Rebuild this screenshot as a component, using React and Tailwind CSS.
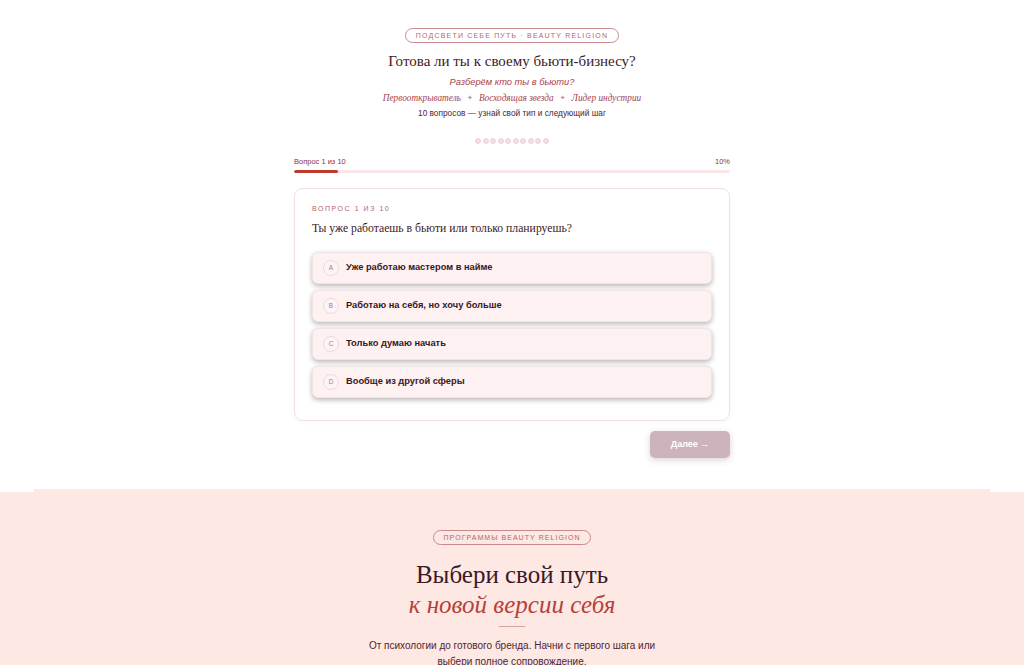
import { useState } from 'react';

const OPTIONS = [
  { key: 'A', text: 'Уже работаю мастером в найме' },
  { key: 'B', text: 'Работаю на себя, но хочу больше' },
  { key: 'C', text: 'Только думаю начать' },
  { key: 'D', text: 'Вообще из другой сферы' },
];

const sans = "font-['Liberation_Sans',Arial,sans-serif]";
const serif = "font-['Liberation_Serif',Georgia,serif]";

const Sparkle = () => (
  <span className="not-italic font-['DejaVu_Sans',sans-serif] text-[7px] text-[#c98a90]">✦</span>
);

const Quiz = () => {
  const [picked, setPicked] = useState(null);
  const step = 1;
  const total = 10;
  const progress = (step / total) * 100;

  return (
    <section className="bg-white pt-[28px] pb-[34px]">
      <div className="mx-auto w-[436px] flex flex-col items-center">
        <div className={`${sans} rounded-full border border-[#c98a8f] px-[10px] h-[15px] flex items-center text-[7px] leading-none tracking-[0.17em] text-[#b0676d] uppercase`}>
          Подсвети себе путь · Beauty Religion
        </div>

        <h1 className={`${serif} mt-[8px] text-[15px] leading-[20px] text-[#3b1a26]`}>
          Готова ли ты к своему бьюти-бизнесу?
        </h1>

        <p className={`${sans} mt-[4px] text-[9.3px] leading-[14px] italic text-[#a8424b]`}>Разберём кто ты в бьюти?</p>

        <div className={`${serif} mt-[2px] flex items-center gap-[6px] text-[9.3px] leading-[14px] italic text-[#a6434c]`}>
          <span>Первооткрыватель</span>
          <Sparkle />
          <span>Восходящая звезда</span>
          <Sparkle />
          <span>Лидер индустрии</span>
        </div>

        <p className={`${sans} mt-[2px] text-[8.3px] leading-[12px] text-[#4b2530]`}>10 вопросов — узнай свой тип и следующий шаг</p>

        <div className="mt-[19px] flex gap-[1.5px]">
          {Array.from({ length: total }).map((_, i) => (
            <span key={i} className="w-[6px] h-[6px] rounded-full bg-[#f5dfe2] border border-[#efd3d7]" />
          ))}
        </div>

        {/* progress */}
        <div className="w-full mt-[13px]">
          <div className={`${sans} flex justify-between text-[7.5px] leading-[10px] text-[#8e2f3c]`}>
            <span>Вопрос {step} из {total}</span>
            <span>{progress}%</span>
          </div>
          <div className="mt-[3px] h-[3px] rounded-full bg-[#f8e6e8] overflow-hidden">
            <div className="h-full rounded-full bg-[#c0392f]" style={{ width: `${progress}%` }} />
          </div>
        </div>

        {/* card */}
        <div className="w-full mt-[15px] rounded-[9px] border border-[#f2e1e3] bg-white shadow-[0_1px_4px_rgba(180,120,130,0.08)] px-[17px] pt-[15px] pb-[22px]">
          <div className={`${sans} text-[7px] leading-[10px] tracking-[0.22em] text-[#b5636b] uppercase`}>Вопрос 1 из 10</div>
          <div className={`${serif} mt-[7px] text-[11.7px] leading-[16px] text-[#3b1a26]`}>
            Ты уже работаешь в бьюти или только планируешь?
          </div>
          <div className="mt-[15px] flex flex-col gap-[6px]">
            {OPTIONS.map((o) => (
              <button
                key={o.key}
                onClick={() => setPicked(o.key)}
                className={`${sans} h-[32px] rounded-[6px] bg-[#fdf1f2] border border-[#f4e3e5] shadow-[0_2px_5px_rgba(60,40,45,0.35)] flex items-center px-[10px] gap-[7px] text-left`}
              >
                <span className="w-[16px] h-[16px] rounded-full border border-[#f1d9dc] bg-[#fdf4f5] flex items-center justify-center text-[6.5px] text-[#a08088]">
                  {o.key}
                </span>
                <span className={`text-[9.3px] font-bold ${picked === o.key ? 'text-[#b03a3e]' : 'text-[#3a1624]'}`}>{o.text}</span>
              </button>
            ))}
          </div>
        </div>

        <div className="w-full mt-[10px] flex justify-end">
          <button className={`${sans} w-[80px] h-[27px] rounded-[5px] bg-[#cdb4bc] text-white text-[9px] font-bold shadow-[0_2px_6px_rgba(120,80,95,0.25)]`}>
            Далее →
          </button>
        </div>
      </div>
    </section>
  );
};

const Programs = () => (
  <section className="bg-[#fde8e4] relative">
    <div className="absolute -top-[3px] left-[34px] right-[34px] h-[3px] bg-[#fdeae6]" />
    <div className="pt-[38px] pb-[20px] flex flex-col items-center">
      <div className={`${sans} rounded-full border border-[#c98a8f] px-[10px] h-[15px] flex items-center text-[7px] leading-none tracking-[0.15em] text-[#b0676d] uppercase`}>
        Программы Beauty Religion
      </div>
      <h2 className={`${serif} mt-[15px] text-[25px] leading-[30px] text-[#3b1a26]`}>Выбери свой путь</h2>
      <div className={`${serif} text-[25px] leading-[30px] italic text-[#b5413b]`}>к новой версии себя</div>
      <div className="mt-[6px] w-[26px] h-px bg-[#d9a3a3]" />
      <p className={`${sans} mt-[11px] text-[10px] leading-[16px] text-[#4e2530] text-center w-[300px]`}>
        От психологии до готового бренда. Начни с первого шага или выбери полное сопровождение.
      </p>
    </div>
  </section>
);

export default function App() {
  return (
    <div className="min-h-screen bg-white">
      <Quiz />
      <Programs />
    </div>
  );
}
